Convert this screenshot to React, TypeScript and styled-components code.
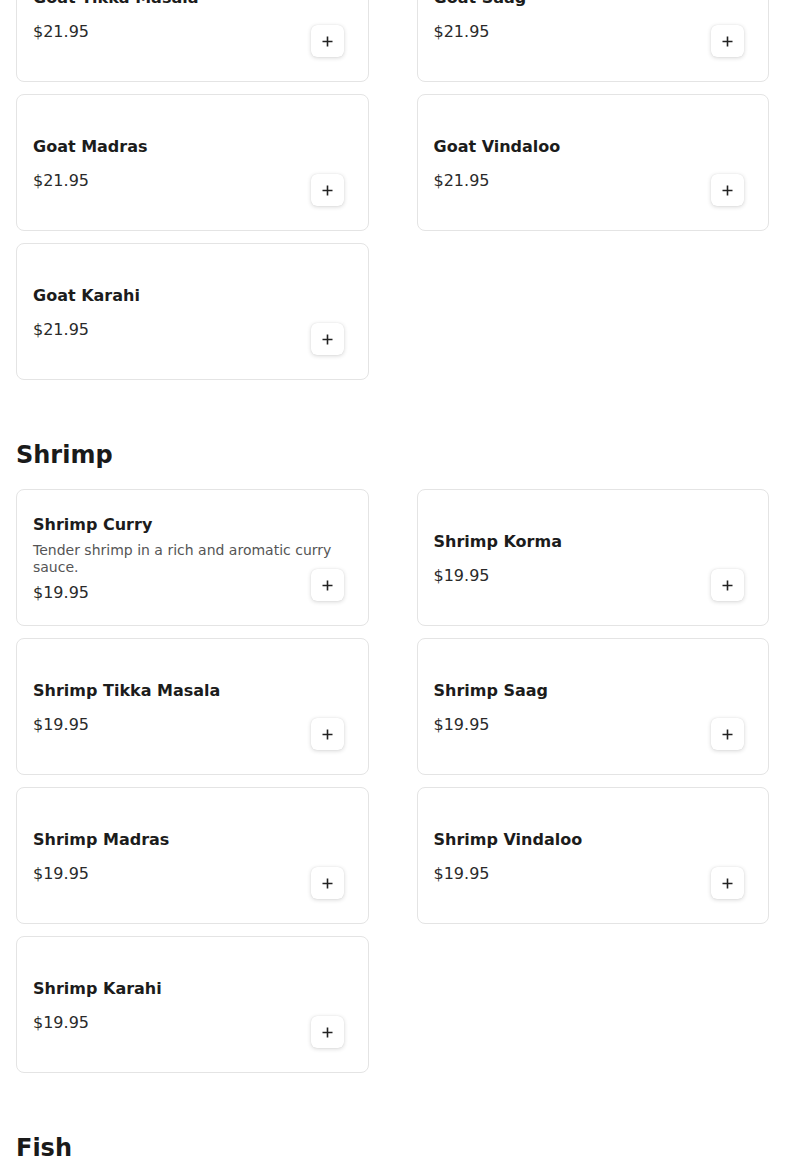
import React from "react";
import styled, { createGlobalStyle } from "styled-components";

const GlobalStyle = createGlobalStyle`
  html, body { margin: 0; padding: 0; background: #ffffff; }
  body { font-family: "DejaVu Sans", "Noto Sans", sans-serif; color: #1a1a1a; }
  * { box-sizing: border-box; }
`;

const Page = styled.main`
  padding: 0 16px;
  margin-top: -55px;
  display: flex;
  flex-direction: column;
  gap: 59px;
`;

const Section = styled.section`
  display: flex;
  flex-direction: column;
`;

const SectionTitle = styled.h2`
  margin: 0 0 18px;
  font-size: 24px;
  line-height: 32px;
  font-weight: 700;
  color: #1a1a1a;
`;

const Grid = styled.div`
  display: grid;
  grid-template-columns: 1fr 1fr;
  column-gap: 48px;
  row-gap: 12px;
`;

const Card = styled.div`
  position: relative;
  height: 137px;
  border: 1px solid #e4e4e4;
  border-radius: 8px;
  background: #fff;
  padding: 18px 16px 16px;
  display: flex;
  align-items: center;
`;

const Info = styled.div`
  flex: 1;
  min-width: 0;
  display: flex;
  flex-direction: column;
`;

const Name = styled.div`
  font-size: 16px;
  line-height: 24px;
  font-weight: 700;
  color: #1c1c1c;
`;

const Desc = styled.div`
  margin-top: 5px;
  font-size: 14px;
  line-height: 17px;
  color: #555;
`;

const Price = styled.div<{ $tight?: boolean }>`
  margin-top: ${(p) => (p.$tight ? "5px" : "10px")};
  font-size: 16px;
  line-height: 24px;
  color: #2a2a2a;
`;

const AddButton = styled.button`
  position: absolute;
  right: 24px;
  bottom: 24px;
  width: 33px;
  height: 32px;
  border: none;
  border-radius: 6px;
  background: #fff;
  box-shadow: 0 1px 4px rgba(0, 0, 0, 0.16), 0 0 1px rgba(0, 0, 0, 0.12);
  display: flex;
  align-items: center;
  justify-content: center;
  padding: 0;
  cursor: pointer;
`;

const PlusIcon = () => (
  <svg width="11" height="11" viewBox="0 0 11 11" aria-hidden="true">
    <path d="M5.5 0.5v10M0.5 5.5h10" stroke="#222" strokeWidth="1.6" fill="none" />
  </svg>
);

type Item = { name: string; price: string; desc?: string };

const MenuCard = ({ item }: { item: Item }) => (
  <Card>
    <Info>
      <Name>{item.name}</Name>
      {item.desc && <Desc>{item.desc}</Desc>}
      <Price $tight={!!item.desc}>{item.price}</Price>
    </Info>
    <AddButton aria-label={`Add ${item.name}`}>
      <PlusIcon />
    </AddButton>
  </Card>
);

const goat: Item[] = [
  { name: "Goat Tikka Masala", price: "$21.95" },
  { name: "Goat Saag", price: "$21.95" },
  { name: "Goat Madras", price: "$21.95" },
  { name: "Goat Vindaloo", price: "$21.95" },
  { name: "Goat Karahi", price: "$21.95" },
];

const shrimp: Item[] = [
  { name: "Shrimp Curry", price: "$19.95", desc: "Tender shrimp in a rich and aromatic curry sauce." },
  { name: "Shrimp Korma", price: "$19.95" },
  { name: "Shrimp Tikka Masala", price: "$19.95" },
  { name: "Shrimp Saag", price: "$19.95" },
  { name: "Shrimp Madras", price: "$19.95" },
  { name: "Shrimp Vindaloo", price: "$19.95" },
  { name: "Shrimp Karahi", price: "$19.95" },
];

export default function App() {
  return (
    <>
      <GlobalStyle />
      <Page>
        <Section>
          <Grid>
            {goat.map((it) => (
              <MenuCard key={it.name} item={it} />
            ))}
          </Grid>
        </Section>
        <Section>
          <SectionTitle>Shrimp</SectionTitle>
          <Grid>
            {shrimp.map((it) => (
              <MenuCard key={it.name} item={it} />
            ))}
          </Grid>
        </Section>
        <Section>
          <SectionTitle>Fish</SectionTitle>
        </Section>
      </Page>
    </>
  );
}
